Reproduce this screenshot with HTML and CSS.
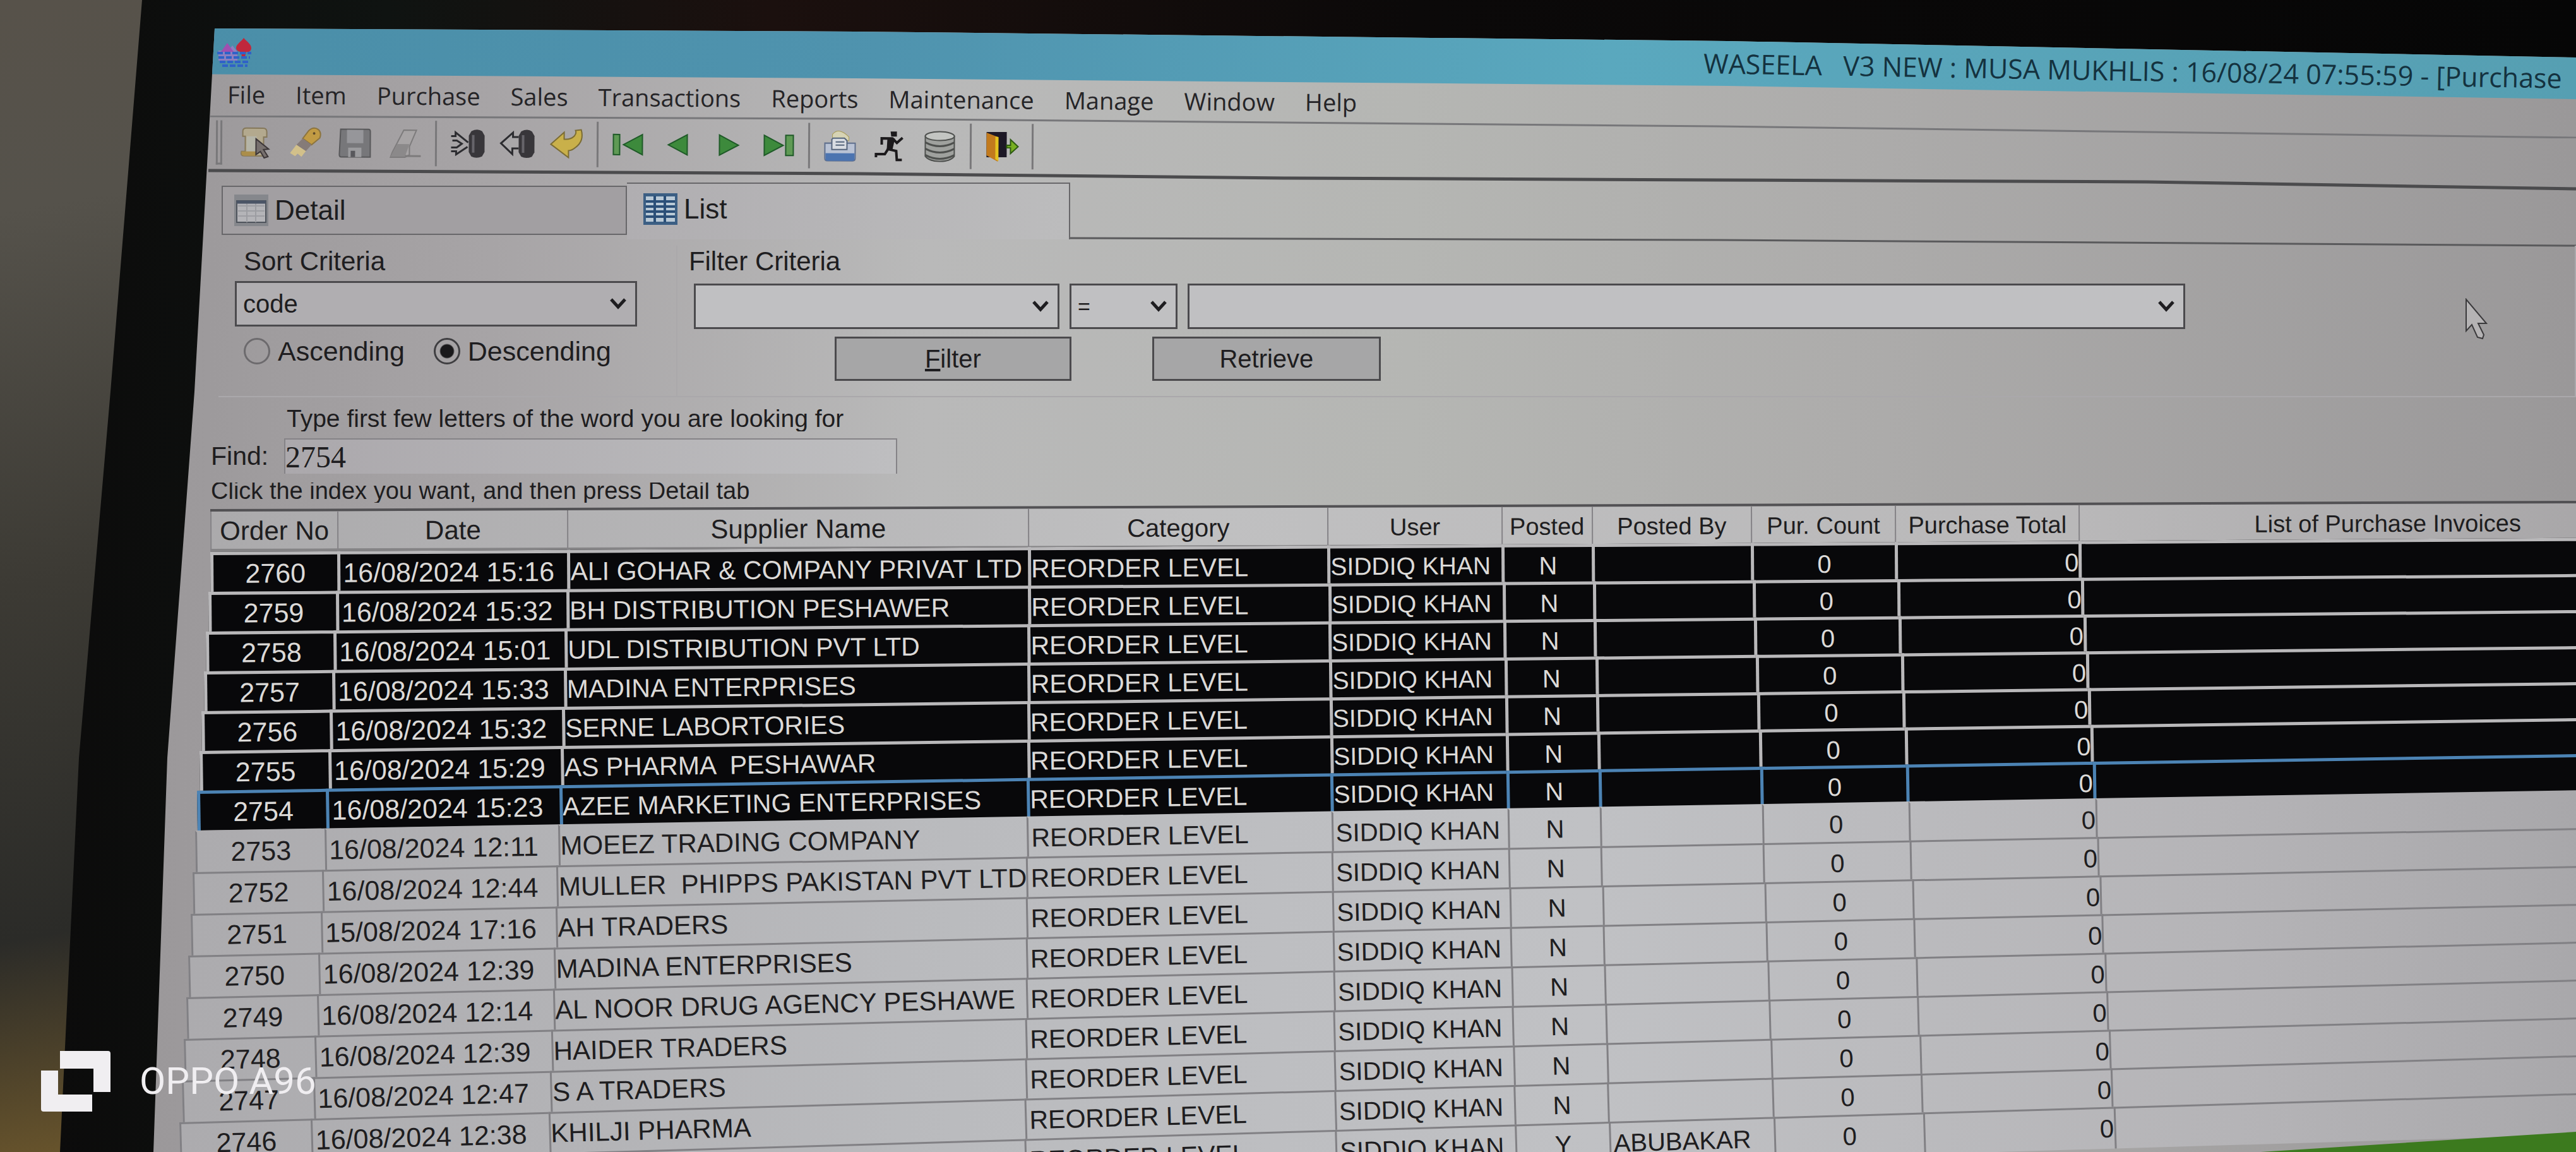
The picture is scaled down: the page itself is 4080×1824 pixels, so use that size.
FILE: index.html
```html
<!DOCTYPE html>
<html lang="en">
<head>
<meta charset="utf-8">
<title>WASEELA V3 NEW - Purchase Order</title>
<link rel="stylesheet" href="styles.css">
</head>
<body>
<div class="monitor">
<main class="screen">
  <header class="titlebar">
    <svg class="app-icon" viewBox="0 0 56 46"><path d="M2 20h16l6-8 8 10v14H2z" fill="#8d7fc0"/><path d="M16 8l10 14H6z" fill="#a04fb0"/><path d="M42 0c5 6 12 10 12 16 0 5-4 7-8 6l-2 8h-5l-1-8c-4 0-8-2-8-6 0-6 8-10 12-16z" fill="#c0283c"/><path d="M0 24h54M2 31h50M4 38h48M8 44h40" stroke="#2f62c8" stroke-width="4" stroke-dasharray="9 3"/></svg>
    <h1>WASEELA   V3 NEW : MUSA MUKHLIS : 16/08/24 07:55:59 - [Purchase</h1>
  </header>
  <nav class="menu">
    <a href="#">File</a><a href="#">Item</a><a href="#">Purchase</a><a href="#">Sales</a><a href="#">Transactions</a><a href="#">Reports</a><a href="#">Maintenance</a><a href="#">Manage</a><a href="#">Window</a><a href="#">Help</a>
  </nav>
  <svg class="rule" viewBox="0 0 3840 36" preserveAspectRatio="none"><path d="M92 1L1120 5L2480 17L3840 35" stroke="#77777a" stroke-width="3" fill="none"/></svg>
  <div class="toolbar" role="toolbar" aria-label="Record tools">
    <span class="grip"></span>
    <button aria-label="New"><svg viewBox="0 0 52 48"><path d="M6 6q0-5 6-5h26q6 0 6 6v8h-5v30H8q-6 0-4-7h6V14H6z" fill="#b3a98e" stroke="#85785a" stroke-width="2"/><path d="M12 14h16v24H12z" fill="#b5b5a8"/><path d="M4 38h24v7H8q-5-1-4-7z" fill="#ab8e4a"/><path d="M27 18l20 16-8 1 7 11-6 2-6-10-7 5z" fill="#77706e" stroke="#3c3638" stroke-width="2"/></svg></button>
    <button aria-label="Search"><svg viewBox="0 0 52 48"><path d="M31 5q8-8 16-2 5 5 2 13L36 27 22 17z" fill="#c19b44" stroke="#8c743e" stroke-width="2"/><path d="M22 17l14 10-9 10-15-10z" fill="#857b78"/><path d="M12 27l15 10-7 9-6-5-4 4-8-5z" fill="#d2c08a"/><circle cx="40" cy="9" r="2" fill="#5e4a2a"/></svg></button>
    <button aria-label="Save"><svg viewBox="0 0 52 48"><path d="M3 2h44q3 0 3 4v40H4q-3 0-3-4z" fill="#77777a" stroke="#58585a" stroke-width="2"/><path d="M13 3h26v21H13z" fill="#96969a"/><path d="M15 31h21v15H15z" fill="#9b9b9e"/><path d="M19 36h7v10h-7z" fill="#58585c"/></svg></button>
    <button aria-label="Erase"><svg viewBox="0 0 52 48"><path d="M24 3h20L33 29v13L26 46H3l3-8z" fill="#a7a4a5" stroke="#7d7b7c" stroke-width="2"/><path d="M14 25h19L26 45H3z" fill="#8b898a"/><path d="M26 44h25" stroke="#7d7b7c" stroke-width="3"/></svg></button>
    <span class="sep"></span>
    <button aria-label="Import"><svg viewBox="0 0 52 48"><path d="M1 12h7V6l20 16M1 36h8v5l18-12M1 30h9l8-6-8-5H3" fill="none" stroke="#2c2c30" stroke-width="3"/><path d="M33 4q10-5 17 0l4 7v26l-4 7q-9 4-17 0l-4-7V11z" fill="#38363a"/><path d="M36 10v28" stroke="#66646a" stroke-width="4"/></svg></button>
    <button aria-label="Export"><svg viewBox="0 0 52 48"><path d="M29 13h-9V6L1 23l18 17v-9h10" fill="#aaa8aa" stroke="#2c2c30" stroke-width="3"/><path d="M33 4q10-5 17 0l4 7v26l-4 7q-9 4-17 0l-4-7V11z" fill="#38363a"/><path d="M36 10v28" stroke="#66646a" stroke-width="4"/></svg></button>
    <button aria-label="Undo"><svg viewBox="0 0 52 48"><path d="M1 24L22 5v11q10 1 16-5 4-5 2-9l9-1q5 18-9 28-6 5-11 5v11z" fill="#c9b04a" stroke="#7b6c34" stroke-width="2"/></svg></button>
    <span class="sep"></span>
    <button aria-label="First"><svg viewBox="0 0 52 48"><path d="M2 8h10v32H2z" fill="#5f9a55" stroke="#1f5a28" stroke-width="2"/><path d="M48 8v32L18 24z" fill="#3d8a3c" stroke="#1f5a28" stroke-width="2"/></svg></button>
    <button aria-label="Previous"><svg viewBox="0 0 52 48"><path d="M40 8v32L10 24z" fill="#3d8a3c" stroke="#1f5a28" stroke-width="2"/></svg></button>
    <button aria-label="Next"><svg viewBox="0 0 52 48"><path d="M12 8v32l30-16z" fill="#3d8a3c" stroke="#1f5a28" stroke-width="2"/></svg></button>
    <button aria-label="Last"><svg viewBox="0 0 52 48"><path d="M4 8v32l30-16z" fill="#3d8a3c" stroke="#1f5a28" stroke-width="2"/><path d="M38 8h12v32H38z" fill="#5f9a55" stroke="#1f5a28" stroke-width="2"/></svg></button>
    <span class="sep"></span>
    <button aria-label="Print"><svg viewBox="0 0 52 48"><path d="M14 6q10-12 26 4v6H14z" fill="#d6d3b4" stroke="#a79a58"/><path d="M2 20h48v24q0 4-4 4H6q-4 0-4-4z" fill="#b9c2d4" stroke="#60708e" stroke-width="2"/><path d="M3 36h46v9q0 3-4 3H7q-4 0-4-3z" fill="#4c74b0"/><path d="M15 12h18l4 4v14H13V14z" fill="#d9dde2" stroke="#56657c" stroke-width="2"/><path d="M19 18h14M19 23h14" stroke="#56657c" stroke-width="2"/></svg></button>
    <button aria-label="Run"><svg viewBox="0 0 52 48"><path d="M27 1h10v8h-9z" fill="#1c1a1c"/><path d="M13 22V12h17l7 7 9-8M28 14l-5 15 13 3 1 14h8M23 29l-5 8H4v5" fill="none" stroke="#1c1a1c" stroke-width="4"/><path d="M22 12h12l-4 18h-9z" fill="#1c1a1c"/></svg></button>
    <button aria-label="Database"><svg viewBox="0 0 52 48"><path d="M3 8v32q6 8 23 8t23-8V8z" fill="#9fa19e" stroke="#4e504e" stroke-width="2"/><ellipse cx="26" cy="8" rx="23" ry="7" fill="#c3c5c2" stroke="#4e504e" stroke-width="2"/><path d="M3 18q23 12 46 0M3 28q23 12 46 0M3 38q23 12 46 0" fill="none" stroke="#4e504e" stroke-width="3"/></svg></button>
    <span class="sep"></span>
    <button aria-label="Exit"><svg viewBox="0 0 52 48"><path d="M2 1h32v40H2z" fill="#1d1826"/><path d="M2 2l18 7v39L2 38z" fill="#c27a1d"/><path d="M16 8l5 1v38l-5-3z" fill="#e4c21f"/><path d="M34 22h6v-9l12 11-12 11v-9h-6z" fill="#78b021" stroke="#2d5a12" stroke-width="2"/></svg></button>
    <span class="sep"></span>
  </div>
  <svg class="rule" viewBox="0 0 3840 36" preserveAspectRatio="none"><path d="M90 3L1120 8L1800 15L2480 18L3160 21L3840 32" stroke="#4b4b4d" stroke-width="5" fill="none"/></svg>

  <div class="tabs" role="tablist">
    <button class="tab" role="tab"><svg viewBox="0 0 54 50"><path d="M0 0h54v50H0z" fill="#85878c"/><path d="M4 10h46v34H4z" fill="#b4b4b8" stroke="#4f545c" stroke-width="2"/><path d="M6 18h42M6 26h42M6 34h42M20 12v32M34 12v32" stroke="#9c9da2" stroke-width="2"/><path d="M4 12h46" stroke="#4b5566" stroke-width="5"/></svg>Detail</button>
    <button class="tab active" role="tab" aria-selected="true"><svg viewBox="0 0 54 50"><path d="M0 0h54v50H0z" fill="#3c5f84"/><path d="M4 5h46v40H4z" fill="#b9c9d6"/><path d="M4 13h46M4 21h46M4 29h46M4 37h46M18 4v42M34 4v42" stroke="#2b4f78" stroke-width="4"/></svg>List</button>
    <svg class="tab-line" viewBox="0 0 2385 20" preserveAspectRatio="none"><path d="M0 6L1025 9L2385 18" stroke="#5a5a5c" stroke-width="3" fill="none"/></svg>
  </div>

  <div class="panel">
    <section class="group">
      <label class="caption" for="sort">Sort Criteria</label>
      <select id="sort"><option>code</option></select>
      <div class="radios">
        <label><input type="radio" name="dir">Ascending</label>
        <label><input type="radio" name="dir" checked>Descending</label>
      </div>
    </section>
    <section class="group filter">
      <label class="caption" for="field">Filter Criteria</label>
      <div class="conditions">
        <select id="field"><option></option></select>
        <select class="operator" aria-label="Operator"><option>=</option></select>
        <select aria-label="Value"><option></option></select>
      </div>
      <div class="actions"><button><u>F</u>ilter</button><button>Retrieve</button></div>
    </section>
  </div>

  <form class="find">
    <p class="hint top">Type first few letters of the word you are looking for</p>
    <label for="find">Find:</label><input id="find" type="text" value="2754">
    <p class="hint bottom">Click the index you want, and then press Detail tab</p>
  </form>

  <table>
    <thead>
      <tr><th>Order No</th><th>Date</th><th>Supplier Name</th><th>Category</th><th>User</th><th>Posted</th><th>Posted By</th><th>Pur. Count</th><th>Purchase Total</th><th>List of Purchase Invoices</th></tr>
    </thead>
    <tbody class="selected">
      <tr style="--i:0"><td>2760</td><td>16/08/2024 15:16</td><td>ALI GOHAR &amp; COMPANY PRIVAT LTD</td><td>REORDER LEVEL</td><td>SIDDIQ KHAN</td><td>N</td><td></td><td>0</td><td>0</td><td></td></tr>
      <tr style="--i:1"><td>2759</td><td>16/08/2024 15:32</td><td>BH DISTRIBUTION PESHAWER</td><td>REORDER LEVEL</td><td>SIDDIQ KHAN</td><td>N</td><td></td><td>0</td><td>0</td><td></td></tr>
      <tr style="--i:2"><td>2758</td><td>16/08/2024 15:01</td><td>UDL DISTRIBUTION PVT LTD</td><td>REORDER LEVEL</td><td>SIDDIQ KHAN</td><td>N</td><td></td><td>0</td><td>0</td><td></td></tr>
      <tr style="--i:3"><td>2757</td><td>16/08/2024 15:33</td><td>MADINA ENTERPRISES</td><td>REORDER LEVEL</td><td>SIDDIQ KHAN</td><td>N</td><td></td><td>0</td><td>0</td><td></td></tr>
      <tr style="--i:4"><td>2756</td><td>16/08/2024 15:32</td><td>SERNE LABORTORIES</td><td>REORDER LEVEL</td><td>SIDDIQ KHAN</td><td>N</td><td></td><td>0</td><td>0</td><td></td></tr>
      <tr style="--i:5"><td>2755</td><td>16/08/2024 15:29</td><td>AS PHARMA  PESHAWAR</td><td>REORDER LEVEL</td><td>SIDDIQ KHAN</td><td>N</td><td></td><td>0</td><td>0</td><td></td></tr>
      <tr class="current" style="--i:6"><td>2754</td><td>16/08/2024 15:23</td><td>AZEE MARKETING ENTERPRISES</td><td>REORDER LEVEL</td><td>SIDDIQ KHAN</td><td>N</td><td></td><td>0</td><td>0</td><td></td></tr>
    </tbody>
    <tbody class="plain">
      <tr style="--i:7"><td>2753</td><td>16/08/2024 12:11</td><td>MOEEZ TRADING COMPANY</td><td>REORDER LEVEL</td><td>SIDDIQ KHAN</td><td>N</td><td></td><td>0</td><td>0</td><td></td></tr>
      <tr style="--i:8"><td>2752</td><td>16/08/2024 12:44</td><td>MULLER  PHIPPS PAKISTAN PVT LTD</td><td>REORDER LEVEL</td><td>SIDDIQ KHAN</td><td>N</td><td></td><td>0</td><td>0</td><td></td></tr>
      <tr style="--i:9"><td>2751</td><td>15/08/2024 17:16</td><td>AH TRADERS</td><td>REORDER LEVEL</td><td>SIDDIQ KHAN</td><td>N</td><td></td><td>0</td><td>0</td><td></td></tr>
      <tr style="--i:10"><td>2750</td><td>16/08/2024 12:39</td><td>MADINA ENTERPRISES</td><td>REORDER LEVEL</td><td>SIDDIQ KHAN</td><td>N</td><td></td><td>0</td><td>0</td><td></td></tr>
      <tr style="--i:11"><td>2749</td><td>16/08/2024 12:14</td><td>AL NOOR DRUG AGENCY PESHAWE</td><td>REORDER LEVEL</td><td>SIDDIQ KHAN</td><td>N</td><td></td><td>0</td><td>0</td><td></td></tr>
      <tr style="--i:12"><td>2748</td><td>16/08/2024 12:39</td><td>HAIDER TRADERS</td><td>REORDER LEVEL</td><td>SIDDIQ KHAN</td><td>N</td><td></td><td>0</td><td>0</td><td></td></tr>
      <tr style="--i:13"><td>2747</td><td>16/08/2024 12:47</td><td>S A TRADERS</td><td>REORDER LEVEL</td><td>SIDDIQ KHAN</td><td>N</td><td></td><td>0</td><td>0</td><td></td></tr>
      <tr style="--i:14"><td>2746</td><td>16/08/2024 12:38</td><td>KHILJI PHARMA</td><td>REORDER LEVEL</td><td>SIDDIQ KHAN</td><td>N</td><td></td><td>0</td><td>0</td><td></td></tr>
      <tr style="--i:15"><td></td><td></td><td></td><td>REORDER LEVEL</td><td>SIDDIQ KHAN</td><td>Y</td><td>ABUBAKAR</td><td>0</td><td>0</td><td></td></tr>
    </tbody>
  </table>
  <div class="backdrop"></div>
</main>
</div>
<svg class="cursor" viewBox="0 0 36 66"><path d="M2 2v50l9-10 9 20 8 2 2-6-9-18h13z" fill="#b5b3b4" stroke="#3a393b" stroke-width="2"/></svg>
<div class="watermark">
  <svg viewBox="0 0 110 96"><path d="M30 0h76q4 0 4 4v61H83V28H30zM0 31h27v38h54v27H4q-4 0-4-4z" fill="#f0eef1"/></svg>
  <span>OPPO A96</span>
</div>
</body>
</html>
```
FILE: styles.css
```css
* { box-sizing: border-box; }

body {
  margin: 0;
  height: 100vh;
  overflow: hidden;
  position: relative;
  font-family: "Liberation Sans", Arial, sans-serif;
  font-size: 42px;
  color: #1e1d20;
  background: linear-gradient(170deg, #57524a 0, #55524b 18%, #3c3a34 50%, #2b2b28 80%, #6b562c 100%) left / 240px 100% no-repeat #0a0909;
}

button, select, input { font: inherit; color: inherit; }

/* bezel */
.monitor {
  height: 100%;
  padding-left: 240px;
  background: linear-gradient(90deg, #0b0a0a, #0f1311 15%, #1b100e 30%, #0b0909 55%, #060606);
  clip-path: polygon(225px 0, 100% 0, 100% 100%, 95px 100%, 125px 1200px, 175px 620px);
}

.screen {
  height: 100%;
  padding-top: 45px;
  overflow: hidden;
  position: relative;
  background: linear-gradient(90deg, #9b989a 0, #a7a4a6 14%, #b9b9b9 32%, #b5b6b3 52%, #adacab 70%, #9a9899 100%);
  clip-path: polygon(100px 45px, 29% 50px, 65% 65px, 100% 91px, 100% 100%, 3px 100%, 25px 1200px, 68px 620px);
}

.titlebar {
  height: 112px;
  margin-bottom: -34px;
  padding-left: 104px;
  display: flex;
  align-items: flex-start;
  background: linear-gradient(90deg, #4a8ea8, #4f93ae 30%, #5aa8be 60%, #569fb2);
  clip-path: polygon(0 0, 100% 0, 100% 112px, 65% 91px, 29% 79px, 0 72px);
}
.app-icon { width: 56px; height: 46px; margin-top: 15px; }
.titlebar h1 {
  margin: 25px 0 0 auto;
  width: 37%;
  font: 400 43px/60px "Open Sans", sans-serif;
  white-space: pre;
  color: #14323f;
  transform: rotate(1deg);
  transform-origin: left center;
}

.menu {
  display: flex;
  gap: 48px;
  height: 60px;
  padding-left: 120px;
  font: 38px/50px "Open Sans", sans-serif;
  transform: rotate(.4deg);
  transform-origin: left center;
}
.menu a { color: #252427; text-decoration: none; }

.rule { display: block; width: 100%; height: 36px; margin-bottom: -36px; }

.toolbar {
  height: 84px;
  display: flex;
  align-items: center;
  gap: 26px;
  padding: 0 0 0 102px;
  transform: rotate(.3deg);
  transform-origin: left center;
}
.toolbar button { padding: 0; border: 0; background: none; display: flex; }
.toolbar svg { width: 53px; height: 48px; overflow: visible; }
.grip { width: 10px; height: 70px; border: solid #79787a; border-width: 0 3px 3px; }
.sep { width: 3px; height: 72px; margin: 0 -5px; background: #79787a; }

.tabs { display: flex; align-items: flex-end; height: 112px; padding-left: 111px; }
.tab {
  width: 642px;
  height: 78px;
  margin-bottom: 7px;
  padding: 0 0 0 18px;
  display: flex;
  align-items: center;
  gap: 10px;
  font-size: 44px;
  border: 2px solid #68676a;
  background: #a29fa2;
}
.tab svg { width: 54px; height: 50px; }
.tab.active { width: 702px; height: 90px; margin-bottom: 0; padding: 0 0 8px 26px; border-width: 2px 2px 0 0; background: linear-gradient(90deg, #b0aeb1, #bcbcbd); }
.tab-line { flex: 1; height: 20px; margin-bottom: -12px; }

.panel {
  display: grid;
  grid-template-columns: 730fr 3020fr;
  height: 240px;
  margin: 10px 0 0 106px;
}
.group { padding: 0 62px 0 26px; border: 2px solid #aaa8ab; border-width: 0 2px 2px 0; }
.group.filter { padding: 0 0 0 26px; }
.caption { display: block; height: 56px; line-height: 50px; margin-left: 14px; }
.filter .caption { margin-left: -8px; }

select {
  display: block;
  width: 100%;
  height: 72px;
  padding: 0 10px;
  border: 3px solid #4b4a4d;
  border-radius: 0;
  appearance: none;
  font-size: 40px;
  background: url("data:image/svg+xml,%3Csvg xmlns='http://www.w3.org/2000/svg' viewBox='0 0 26 18'%3E%3Cpath d='M2 2l11 12L24 2' fill='none' stroke='%231e1d20' stroke-width='5'/%3E%3C/svg%3E") right 14px center / 26px 18px no-repeat #b0aeb1;
}
.conditions { display: grid; grid-template-columns: 579fr 171fr 1580fr; gap: 16px; width: 79.3%; margin-top: 4px; }
.conditions select { background-color: #c0c0c2; }
.operator { font-size: 34px; }

.radios { display: flex; gap: 46px; padding: 14px 0 0 14px; }
.radios label { display: flex; align-items: center; gap: 12px; line-height: 50px; font-size: 43px; }
.radios input {
  width: 42px;
  height: 42px;
  margin: 0;
  appearance: none;
  border: 3px solid #6c6a6d;
  border-radius: 50%;
}
.radios input:checked { border-color: #3f3e41; background: radial-gradient(#1a191b 10px, transparent 12px); }

.actions { display: flex; gap: 128px; padding: 12px 0 0 223px; }
.actions button { width: 375px; height: 70px; padding: 0; font-size: 40px; border: 3px solid #4b4a4d; background: #a6a6a7; }
.actions button + button { width: 362px; }

.find {
  display: grid;
  grid-template-columns: 116px 971px;
  align-items: center;
  padding: 12px 0 0 94px;
  font-size: 41px;
}
.hint { grid-column: 1 / -1; margin: 0; overflow: hidden; display: flex; white-space: nowrap; }
.hint.top { height: 42px; margin: 0 0 11px 120px; line-height: 44px; font-size: 39px; }
.hint.bottom { height: 32px; margin-top: 14px; align-items: flex-end; line-height: 38px; font-size: 38px; }
.find input {
  height: 56px;
  padding: 0;
  border: 2px solid #858387;
  border-bottom: 0;
  background: linear-gradient(90deg, #aba8ac, #bebec0);
  font: 48px/50px "Liberation Serif", serif;
}

table, thead, tbody { display: block; }
table { margin-top: 10px; }
tr {
  display: grid;
  grid-template-columns: 201fr 364fr 729fr 474fr 275fr 143fr 252fr 228fr 291fr 976fr;
  width: calc((410% + var(--i, 0) * 1%) / 4);
  margin-left: calc(93px - var(--i, 0) * 7px / 2);
  transform: rotate(calc((34 + var(--i) * 9) * -.01deg));
  transform-origin: left top;
}
thead tr { transform: rotate(-.2deg); border-top: 4px solid #525154; background: linear-gradient(90deg, #abaaac, #c0c0c1 40%, #b9b8b9 75%, #a5a3a5); }
th, td {
  height: 63px;
  padding: 0 4px;
  overflow: hidden;
  white-space: pre;
  text-align: left;
  font-weight: 400;
  font-size: 40px;
  line-height: 58px;
}
th { height: 64px; padding: 0; line-height: 62px; text-align: center; border-left: 2px solid #858387; border-bottom: 5px solid #858486; font-size: 38px; }
th:nth-child(-n+3) { font-size: 42px; }
th:nth-child(4) { font-size: 40px; }

td { border-top: 5px solid #b9b8ba; border-left: 5px solid #b9b8ba; }
td:nth-child(-n+2) { font-size: 43px; }
td:nth-child(3), td:nth-child(4) { font-size: 41px; padding: 0; }
td:nth-child(5) { font-size: 39px; padding: 0; }
td:nth-child(1), td:nth-child(6), td:nth-child(8) { text-align: center; }
td:nth-child(9) { text-align: right; padding-right: 0; }

.selected tr { background: #08080a; color: #dcdad8; }
.selected .current td { border-color: #4c83b4; }

.plain tr { background: linear-gradient(90deg, #acabae 0, #babbbe 30%, #c0c1c4 55%, #b5b4b7 80%, #a3a2a5 100%); }
.plain td { height: 66px; border-width: 3px; border-color: #818084; line-height: 62px; }
.plain td:nth-child(3) { font-size: 42px; }
.plain td:nth-child(4) { padding-left: 4px; }
.plain td:nth-child(5) { font-size: 40px; padding-left: 4px; }
.plain tr:first-child td { border-top-color: transparent; }

/* desktop visible under the window edge */
.backdrop {
  position: absolute;
  right: 0;
  bottom: 0;
  width: 13%;
  height: 32px;
  background: #3c7a1e;
  clip-path: polygon(0 100%, 100% 0, 100% 100%);
}

.cursor { position: absolute; left: 3904px; top: 472px; width: 36px; height: 66px; }

.watermark {
  position: absolute;
  left: 65px;
  bottom: 62px;
  display: flex;
  align-items: center;
  gap: 46px;
  color: #f0eef1;
  font: 60px/72px Roboto, sans-serif;
}
.watermark svg { width: 110px; height: 100px; }
```
